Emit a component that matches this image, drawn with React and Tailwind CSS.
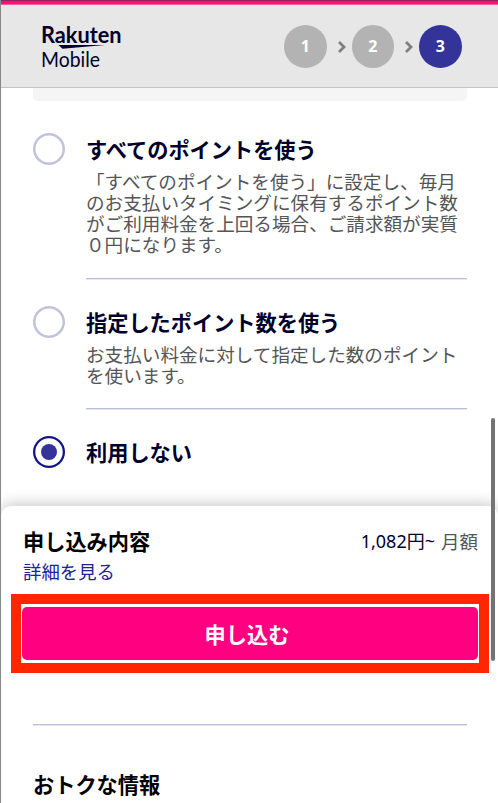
import { Fragment } from 'react';

const options = [
  {
    title: 'すべてのポイントを使う',
    lines: [
      '「すべてのポイントを使う」に設定し、毎月',
      'のお支払いタイミングに保有するポイント数',
      'がご利用料金を上回る場合、ご請求額が実質',
      '０円になります。',
    ],
    className: 'h-[173px]',
  },
  {
    title: '指定したポイント数を使う',
    lines: ['お支払い料金に対して指定した数のポイント', 'を使います。'],
    className: 'h-[130px]',
  },
  { title: '利用しない', lines: [], className: 'h-[75px]', selected: true },
];

function Logo() {
  return (
    <svg className="overflow-visible" width="90" height="50" viewBox="0 0 90 50" aria-label="Rakuten Mobile" fill="#00002a">
      <text x="0" y="17.5" textLength="80.5" lengthAdjust="spacingAndGlyphs" fontFamily="Lato, sans-serif" fontWeight="700" fontSize="22">
        Rakuten
      </text>
      <path d="M17.5 20H64L21.5 23.8Z" />
      <text x="0" y="42" textLength="59" lengthAdjust="spacingAndGlyphs" fontFamily="Lato, sans-serif" fontSize="21.5">
        Mobile
      </text>
    </svg>
  );
}

function Steps() {
  return (
    <div className="flex items-center">
      {[1, 2, 3].map((step) => (
        <Fragment key={step}>
          {step > 1 && (
            <svg className="ml-[11px] mr-[6px] mt-px" width="8" height="12" viewBox="0 0 8 12" fill="none" stroke="#808080" strokeWidth="2.8">
              <path d="M1 1L6 6L1 11" />
            </svg>
          )}
          <div
            className={`flex h-[42.6px] w-[42.6px] items-center justify-center rounded-full font-['Noto_Sans',sans-serif] text-[16px] font-bold text-white ${
              step === 3 ? 'bg-[#333399]' : 'bg-[#b3b3b3]'
            }`}
          >
            {step}
          </div>
        </Fragment>
      ))}
    </div>
  );
}

function Radio({ selected }) {
  return (
    <span
      className={`flex h-8 w-8 shrink-0 items-center justify-center rounded-full bg-white ring-inset ${
        selected ? 'ring-[2.3px] ring-[#14148c]' : 'ring-[2.5px] ring-[#c2c2dc]'
      }`}
    >
      {selected && <span className="h-4 w-4 rounded-full bg-[#333399]" />}
    </span>
  );
}

function Option({ option, last }) {
  return (
    <div className={`flex gap-[21px] ${option.className}`}>
      <Radio selected={option.selected} />
      <div className="flex min-w-0 grow flex-col">
        <h3 className="mt-px whitespace-nowrap text-[21.2px] font-bold leading-[30px] text-[#00002a]">
          {option.title}
        </h3>
        <p className="mt-[5.5px] whitespace-nowrap text-[18.6px] leading-[21.33px] text-[#555555]">
          {option.lines.map((line) => (
            <span key={line} className="block">{line}</span>
          ))}
        </p>
        {!last && <Divider className="mb-[26px] mt-auto w-[381px]" />}
      </div>
    </div>
  );
}

function Divider({ className }) {
  return <div className={`h-0.5 shrink-0 border-b border-[#e6e6f2] bg-[#bcbcdc] bg-clip-padding ${className}`} />;
}

export default function App() {
  return (
    <main className="relative flex h-[803px] w-[498px] flex-col overflow-hidden border-l border-[#888888] bg-white font-['Noto_Sans_CJK_JP',sans-serif]">
      <div className="-ml-px h-[5px] shrink-0 border-b border-t border-b-[#f55e9f] border-t-[#942454] bg-[#ff0f7b]" />
      <header className="flex h-[83px] shrink-0 items-start justify-between border-b border-[#c4c4c4] bg-[#e7e7e7] pl-10 pr-[36.3px] pt-5">
        <Logo />
        <Steps />
      </header>

      <section className="flex h-[418px] shrink-0 flex-col pl-8 pr-[30px]">
        <div className="h-[13px] w-[434px] shrink-0 rounded-b-[5px] bg-[#f5f5f5]" />
        <div className="pt-8">
          {options.map((option, i) => (
            <Option key={option.title} option={option} last={i === options.length - 1} />
          ))}
        </div>
      </section>

      <section className="relative h-[167px] shrink-0 rounded-t-[10px] bg-white pl-[10px] pr-[9px] shadow-[0_-3px_14px_rgba(0,0,0,0.2)] [clip-path:inset(-20px_0_0_0)]">
        <div className="flex justify-between pl-3 pr-[11px] pt-[19px]">
          <h2 className="text-[21.2px] font-bold leading-[32px] text-black">申し込み内容</h2>
          <p className="flex items-center gap-[6px] whitespace-nowrap text-[18.6px] leading-[30px]">
            <span className="font-['Noto_Sans','Noto_Sans_CJK_JP',sans-serif] text-[18px] text-[#00002a]">1,082円~</span>
            <span className="text-[18.5px] text-[#555555]">月額</span>
          </p>
        </div>
        <a className="ml-3 block text-[18.4px] leading-[28px] text-[#22229a]">詳細を見る</a>
        <div className="mt-[9px] h-[79px] border-[10px] border-[#ff2600] bg-white px-px py-[3px]">
          <button className="h-[53px] w-full rounded-[5px] bg-[#ff0080] pr-[6px] text-[21.2px] font-bold leading-[30px] text-white">
            申し込む
          </button>
        </div>
      </section>

      <section className="pl-8 pt-[51px]">
        <Divider className="w-[434px]" />
        <h2 className="mt-[41px] text-[21.2px] font-bold leading-[34px] text-black">おトクな情報</h2>
      </section>

      <div className="absolute right-[3px] top-[418px] h-[243px] w-1 rounded-full bg-[#737373]" />
    </main>
  );
}
